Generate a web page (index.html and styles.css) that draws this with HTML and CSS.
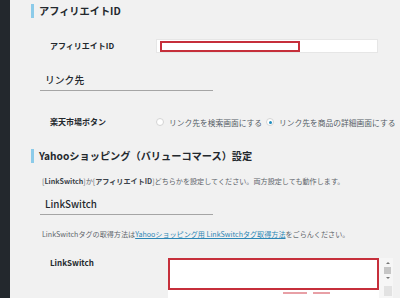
FILE: index.html
```html
<!DOCTYPE html>
<html lang="ja">
<head>
  <meta charset="UTF-8" />
  <title>アフィリエイト設定</title>
  <link rel="stylesheet" href="styles.css">
</head>
<body>
  <div class="sidebar"></div>
  <div class="main">
    <h2 class="title">アフィリエイトID</h2>

    <div class="row row-id">
      <label class="label">アフィリエイトID</label>
      <div class="field">
        <div class="mark mark-id"></div>
      </div>
    </div>

    <h3 class="subtitle sub-link">リンク先</h3>

    <div class="row row-radio">
      <span class="label">楽天市場ボタン</span>
      <div class="radios">
        <span class="radio"></span>
        <span class="radio-text">リンク先を検索画面にする</span>
        <span class="radio checked"></span>
        <span class="radio-text">リンク先を商品の詳細画面にする</span>
      </div>
    </div>

    <h2 class="title title-yahoo">Yahooショッピング（バリューコマース）設定</h2>

    <p class="note note-first">[<b>LinkSwitch</b>]か[<b>アフィリエイトID</b>]どちらかを設定してください。両方設定しても動作します。</p>

    <h3 class="subtitle sub-switch">LinkSwitch</h3>

    <p class="note note-second">LinkSwitchタグの取得方法は<a href="#">Yahooショッピング用 LinkSwitchタグ取得方法</a>をごらんください。</p>

    <div class="row row-text">
      <span class="label">LinkSwitch</span>
      <div class="textarea">
        <div class="text-body">
          <div class="mark mark-text"></div>
          <div class="scraps">
            <span class="scrap scrap-a"></span>
            <span class="scrap scrap-b"></span>
          </div>
        </div>
        <div class="scrollbar">
          <span class="arrow up"></span>
          <span class="thumb"></span>
          <span class="arrow down"></span>
          <span class="grip"></span>
        </div>
      </div>
    </div>
  </div>
</body>
</html>
```

FILE: styles.css
```css
* {
  box-sizing: border-box;
}

body {
  margin: 0;
  height: 298px;
  overflow: hidden;
  display: flex;
  background: #f1f1f1;
  color: #23282d;
  font-family: "Noto Sans CJK JP", "Noto Sans", sans-serif;
}

.sidebar {
  flex: 0 0 10px;
  background: #23282d;
}

.main {
  flex: 1;
  padding: 4px 0 0 21px;
}

.title {
  margin: 0;
  height: 14px;
  line-height: 14px;
  border-left: 3px solid #8ccbe9;
  padding-left: 5px;
  font-size: 10.2px;
  font-weight: bold;
  white-space: nowrap;
}

.title-yahoo {
  margin-top: 21px;
}

.row {
  display: flex;
  align-items: center;
}

.label {
  flex: 0 0 125px;
  padding-left: 19px;
  font-size: 8px;
  font-weight: bold;
  line-height: 12px;
  white-space: nowrap;
}

.row-id {
  margin-top: 21px;
  height: 14px;
}

.field {
  width: 222px;
  height: 14px;
  background: #fff;
  border: 1px solid #e6e6e6;
  padding: 1px 0 0 3px;
}

.mark {
  border: 2px solid #c62f3b;
}

.mark-id {
  width: 140px;
  height: 11px;
}

.subtitle {
  margin: 0 0 0 9px;
  width: 173px;
  padding: 0 0 3px 5px;
  line-height: 14px;
  font-size: 9.8px;
  font-weight: 500;
  border-bottom: 1px solid #a5a5a5;
}

.sub-link {
  margin-top: 20px;
}

.sub-switch {
  margin-top: 11px;
}

.row-radio {
  margin-top: 25px;
  height: 12px;
}

.radios {
  display: flex;
  align-items: center;
  font-size: 7.75px;
  color: #555d66;
  white-space: nowrap;
}

.radio {
  width: 8px;
  height: 8px;
  border-radius: 50%;
  background: #fff;
  border: 1px solid #d4d4d4;
  margin-right: 5px;
  position: relative;
}

.radio.checked::after {
  content: "";
  position: absolute;
  left: 1.5px;
  top: 1.5px;
  width: 3px;
  height: 3px;
  border-radius: 50%;
  background: #1e8cbe;
}

.radio-text {
  margin-right: 4px;
}

.note {
  margin: 0;
  padding-left: 11px;
  font-size: 7.1px;
  line-height: 10px;
  color: #60656b;
  white-space: nowrap;
}

.note b {
  color: #3c434a;
}

.note a {
  color: #2c86b5;
}

.note-first {
  margin-top: 13px;
}

.note-second {
  margin-top: 14px;
}

.row-text {
  margin-top: 19px;
  align-items: flex-start;
}

.row-text .label {
  flex-basis: 137px;
  line-height: 10px;
}

.textarea {
  display: flex;
  width: 225px;
  height: 50px;
  background: #fff;
}

.text-body {
  width: 211px;
}

.mark-text {
  height: 32px;
}

.scraps {
  display: flex;
  padding: 2px 0 0 115px;
  gap: 6px;
}

.scrap {
  height: 2px;
  background: #e8a0a6;
}

.scrap-a {
  width: 24px;
}

.scrap-b {
  width: 17px;
}

.scrollbar {
  flex: 1;
  display: flex;
  flex-direction: column;
  align-items: center;
  padding: 4px 0 0 3px;
  background: #f6f6f6;
}

.arrow {
  width: 0;
  height: 0;
  border-left: 2px solid transparent;
  border-right: 2px solid transparent;
}

.arrow.up {
  border-bottom: 2px solid #777;
}

.arrow.down {
  border-top: 2px solid #777;
}

.thumb {
  width: 7px;
  height: 7px;
  background: #c6c6c6;
  margin: 3px 0;
}

.grip {
  width: 8px;
  height: 10px;
  margin-top: 7px;
  background: #e2e2e2;
}
```
